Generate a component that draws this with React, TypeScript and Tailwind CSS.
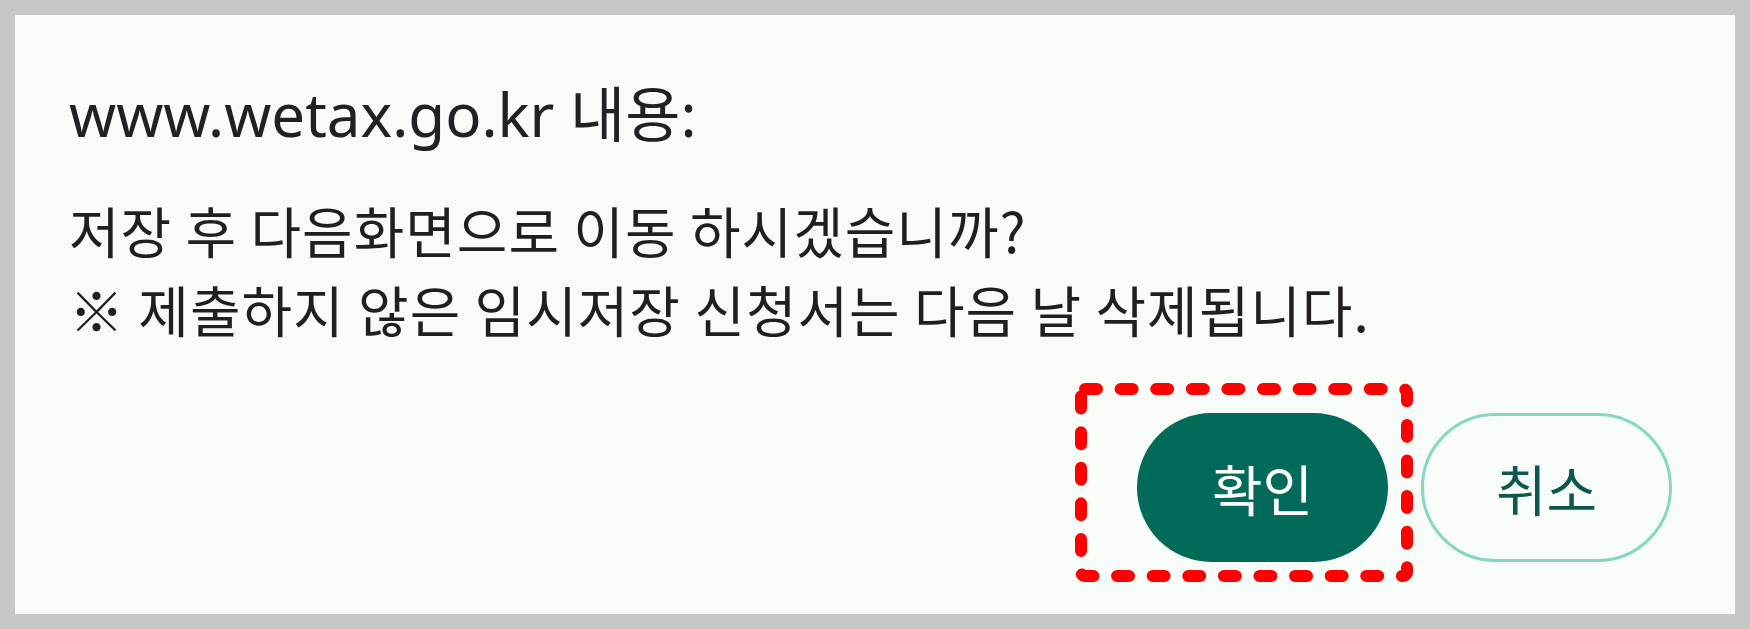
import React from "react";

export default function App() {
  return (
    <div className="w-[1750px] h-[629px] bg-[#c5c9c5] p-[15px]">
      <div className="h-full bg-[#f7fcf9] flex flex-col pl-[54px] pr-[63px] pt-[59px]">
        <div
          className="h-[80px] text-[60px] leading-[80px] text-[#202124] whitespace-nowrap"
          style={{ fontFamily: '"Noto Sans", "Noto Sans CJK KR", sans-serif' }}
        >
          www.wetax.go.kr 내용:
        </div>
        <div
          className="mt-[36px] text-[55px] leading-[79px] tracking-[1px] text-[#1f1f1f] whitespace-nowrap"
          style={{ fontFamily: '"Noto Sans CJK KR", sans-serif' }}
        >
          <div>저장 후 다음화면으로 이동 하시겠습니까?</div>
          <div>※ 제출하지 않은 임시저장 신청서는 다음 날 삭제됩니다.</div>
        </div>
        <div
          className="mt-[65px] flex justify-end gap-[33px]"
          style={{ fontFamily: '"Noto Sans CJK KR", sans-serif' }}
        >
          <div className="relative">
            <button className="w-[251px] h-[149px] rounded-full bg-[#016a58] text-white text-[55px] leading-none flex items-center justify-center">
              확인
            </button>
            <svg
              className="absolute pointer-events-none"
              style={{ left: -62, top: -30 }}
              width={338}
              height={199}
              viewBox="0 0 338 199"
            >
              <rect
                x={6}
                y={6}
                width={326}
                height={187}
                rx={4}
                fill="none"
                stroke="#ff0000"
                strokeWidth={12}
                strokeLinecap="round"
                strokeDasharray="12 23.6"
              />
            </svg>
          </div>
          <button className="w-[251px] h-[149px] rounded-full border-[3px] border-[#86d7c2] bg-transparent text-[#0d584d] text-[55px] leading-none flex items-center justify-center">
            취소
          </button>
        </div>
      </div>
    </div>
  );
}
